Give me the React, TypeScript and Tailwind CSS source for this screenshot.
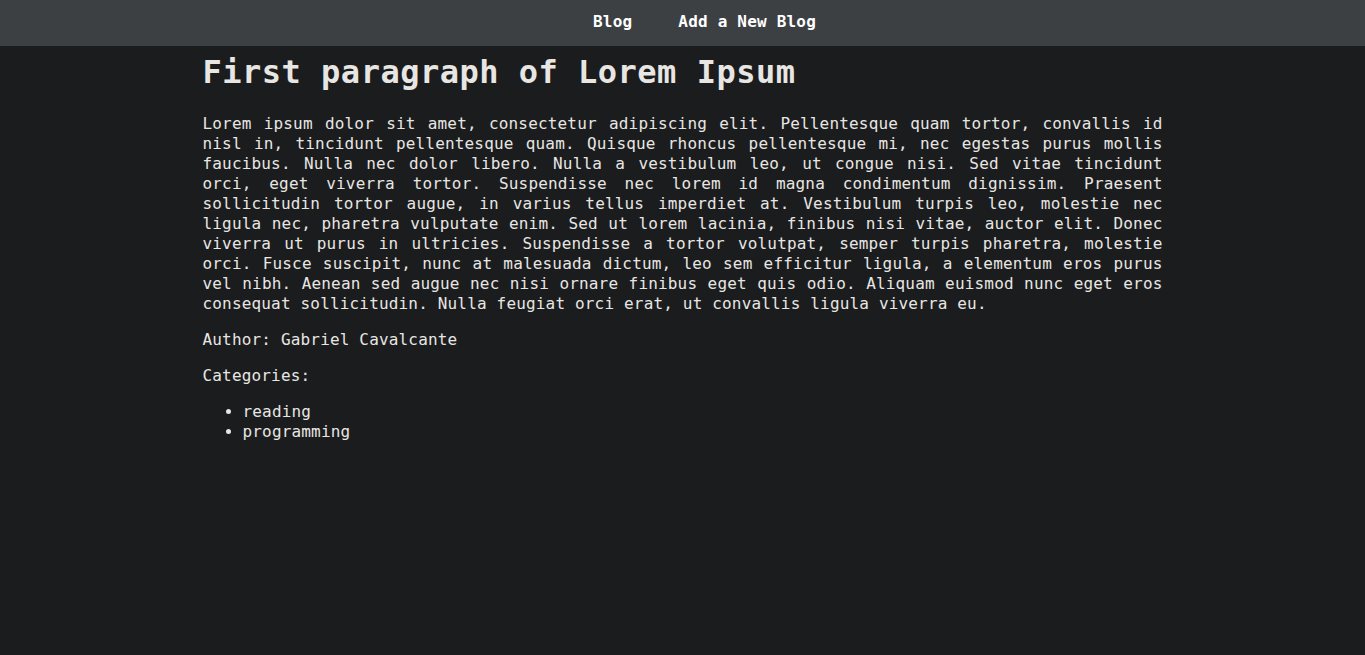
import React from 'react';

const paragraph =
  'Lorem ipsum dolor sit amet, consectetur adipiscing elit. Pellentesque quam tortor, convallis id nisl in, tincidunt pellentesque quam. Quisque rhoncus pellentesque mi, nec egestas purus mollis faucibus. Nulla nec dolor libero. Nulla a vestibulum leo, ut congue nisi. Sed vitae tincidunt orci, eget viverra tortor. Suspendisse nec lorem id magna condimentum dignissim. Praesent sollicitudin tortor augue, in varius tellus imperdiet at. Vestibulum turpis leo, molestie nec ligula nec, pharetra vulputate enim. Sed ut lorem lacinia, finibus nisi vitae, auctor elit. Donec viverra ut purus in ultricies. Suspendisse a tortor volutpat, semper turpis pharetra, molestie orci. Fusce suscipit, nunc at malesuada dictum, leo sem efficitur ligula, a elementum eros purus vel nibh. Aenean sed augue nec nisi ornare finibus eget quis odio. Aliquam euismod nunc eget eros consequat sollicitudin. Nulla feugiat orci erat, ut convallis ligula viverra eu.';

export default function App() {
  const categories = ['reading', 'programming'];

  return (
    <div className="min-h-screen bg-[#1b1c1e] text-[#e8e6e3] font-['DejaVu_Sans_Mono','Liberation_Mono',monospace]">
      {/* top nav */}
      <nav className="h-[46px] bg-[#3d4043] flex items-center justify-center pb-[2px]">
        <a className="ml-[44px] text-[16px] tracking-[0.2px] font-semibold text-white">Blog</a>
        <a className="ml-[46px] text-[16px] tracking-[0.2px] font-semibold text-white">Add a New Blog</a>
      </nav>

      <main className="w-[960px] mx-auto text-[16px] tracking-[0.17px] leading-5">
        <h1 className="pt-[7px] text-[32px] leading-[38px] font-bold tracking-[0.5px]">
          First paragraph of Lorem Ipsum
        </h1>
        <p className="mt-[23px] text-justify">{paragraph}</p>
        <p className="mt-4">Author: Gabriel Cavalcante</p>
        <p className="mt-4">Categories:</p>
        <ul className="mt-4 pl-10 list-disc">
          {categories.map((c) => (
            <li key={c}>{c}</li>
          ))}
        </ul>
      </main>
    </div>
  );
}
